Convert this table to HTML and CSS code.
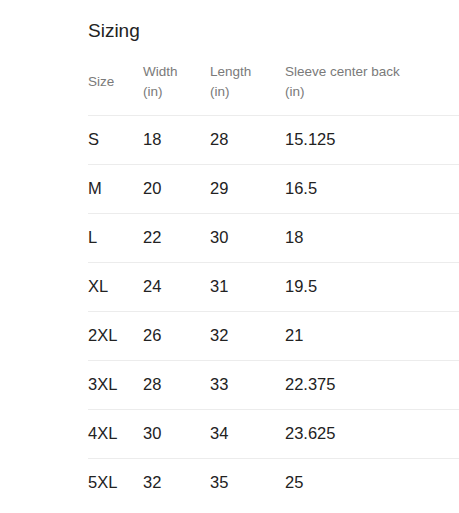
FILE: index.html
```html
<!DOCTYPE html>
<html>
<head>
<meta charset="utf-8">
<link rel="stylesheet" href="styles.css">
</head>
<body>
<section class="sizing">
  <h2 class="title">Sizing</h2>
  <table class="size-table">
    <colgroup>
      <col class="c-size"><col class="c-width"><col class="c-length"><col class="c-sleeve">
    </colgroup>
    <thead>
      <tr><th>Size</th><th>Width<br>(in)</th><th>Length<br>(in)</th><th>Sleeve center back<br>(in)</th></tr>
    </thead>
    <tbody>
      <tr><td>S</td><td>18</td><td>28</td><td>15.125</td></tr>
      <tr><td>M</td><td>20</td><td>29</td><td>16.5</td></tr>
      <tr><td>L</td><td>22</td><td>30</td><td>18</td></tr>
      <tr><td>XL</td><td>24</td><td>31</td><td>19.5</td></tr>
      <tr><td>2XL</td><td>26</td><td>32</td><td>21</td></tr>
      <tr><td>3XL</td><td>28</td><td>33</td><td>22.375</td></tr>
      <tr><td>4XL</td><td>30</td><td>34</td><td>23.625</td></tr>
      <tr><td>5XL</td><td>32</td><td>35</td><td>25</td></tr>
    </tbody>
  </table>
</section>
</body>
</html>
```
FILE: styles.css
```css
html, body {
  margin: 0;
  padding: 0;
  background: #fff;
}
body {
  font-family: "Liberation Sans", Arial, sans-serif;
  color: #222;
}
.sizing {
  padding: 17px 0 0 88px;
}
.title {
  margin: 0;
  font-size: 19px;
  font-weight: 400;
  line-height: 28px;
  color: #222;
}
.size-table {
  width: 100%;
  border-collapse: collapse;
  margin-top: 11px;
}
.c-size { width: 55px; }
.c-width { width: 67px; }
.c-length { width: 75px; }
.size-table th {
  text-align: left;
  font-weight: 400;
  font-size: 13.5px;
  line-height: 20px;
  color: #7a7a7a;
  padding: 3px 0 11px 0;
  vertical-align: middle;
  height: 45px;
}
.size-table td {
  font-size: 16.5px;
  line-height: 20px;
  padding: 0 0 2px 0;
  height: 46px;
  border-top: 1px solid #ececec;
  vertical-align: middle;
  color: #222;
}
```
